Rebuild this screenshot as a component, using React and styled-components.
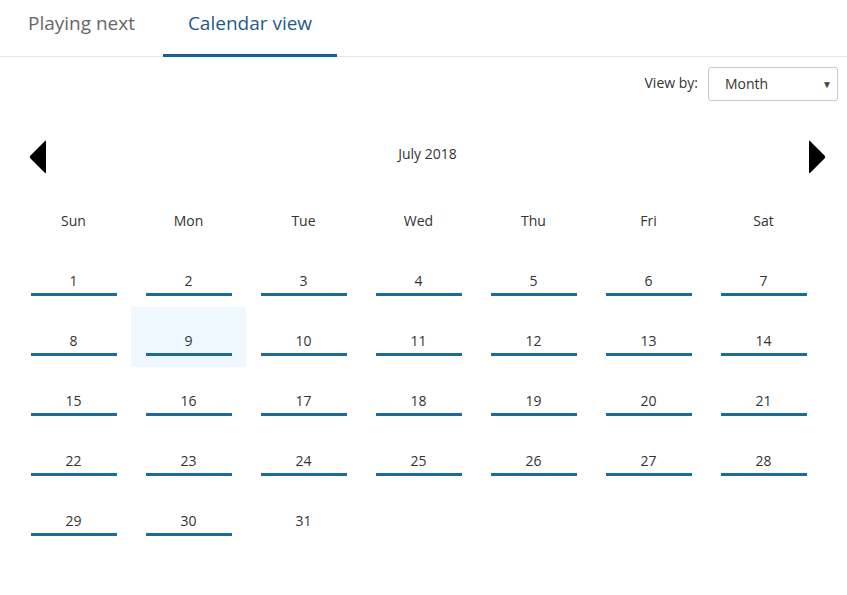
import React from 'react'
import styled, { createGlobalStyle } from 'styled-components'

const GlobalStyle = createGlobalStyle`
  body {
    margin: 0;
    background: #fff;
    font-family: "Open Sans", "Liberation Sans", sans-serif;
    color: #333;
  }
`

const Page = styled.div`
  width: 847px;
  height: 595px;
  overflow: hidden;
`

const Tabs = styled.div`
  display: flex;
  height: 57px;
  border-bottom: 1px solid #e6e6e6;
  box-sizing: border-box;
`

const Tab = styled.div`
  display: flex;
  align-items: center;
  justify-content: center;
  width: ${p => p.width}px;
  height: 57px;
  box-sizing: border-box;
  padding-bottom: 8px;
  font-size: 19px;
  color: ${p => (p.active ? '#1f5a8c' : '#666')};
  border-bottom: 3px solid ${p => (p.active ? '#1a5f96' : 'transparent')};
  margin-bottom: -1px;
`

const Toolbar = styled.div`
  display: flex;
  justify-content: flex-end;
  align-items: center;
  gap: 10px;
  padding: 10px 9px 0 0;
  height: 34px;
`

const Label = styled.span`
  font-size: 14px;
  color: #333;
  padding-bottom: 3px;
`

const Select = styled.div`
  position: relative;
  width: 130px;
  height: 34px;
  box-sizing: border-box;
  border: 1px solid #ccc;
  border-radius: 3px;
  display: flex;
  align-items: center;
  padding: 0 0 2px 16px;
  font-size: 14px;
  color: #333;
`

const Caret = styled.span`
  position: absolute;
  right: 5px;
  top: 9px;
  font-size: 10px;
  color: #444;
`

const MonthBar = styled.div`
  display: flex;
  align-items: center;
  justify-content: space-between;
  padding: 0 20px 0 28px;
  margin-top: 38px;
  height: 36px;
`

const MonthTitle = styled.div`
  font-size: 14px;
  color: #333;
  padding-bottom: 8px;
`

const Arrow = styled.svg`
  width: 20px;
  height: 36px;
  display: block;
`

const Grid = styled.div`
  display: grid;
  grid-template-columns: repeat(7, 115px);
  margin: 12px 0 0 16px;
`

const DayName = styled.div`
  height: 60px;
  display: flex;
  justify-content: center;
  align-items: flex-start;
  font-size: 14px;
  color: #333;
  padding-top: 24px;
  box-sizing: border-box;
`

const Cell = styled.div`
  height: 60px;
  box-sizing: border-box;
  background: ${p => (p.selected ? '#eff7ff' : 'transparent')};
  display: flex;
  flex-direction: column;
  align-items: center;
  padding-top: 24px;
`

const DateNum = styled.div`
  width: 86px;
  text-align: center;
  font-size: 14px;
  line-height: 19px;
  color: #333;
  padding-bottom: 3px;
  border-bottom: 3px solid ${p => (p.marked ? '#1b6c9b' : 'transparent')};
`

const days = ['Sun', 'Mon', 'Tue', 'Wed', 'Thu', 'Fri', 'Sat']

const LeftArrow = () => (
  <Arrow viewBox="0 0 20 36">
    <path d="M18 2 L18 33 Q18 35 16.5 33.5 L2.5 19.5 Q1 18 2.5 16.5 L16.5 2.5 Q18 1 18 2 Z" fill="#000" />
  </Arrow>
)

const RightArrow = () => (
  <Arrow viewBox="0 0 20 36">
    <path d="M2 2 L2 33 Q2 35 3.5 33.5 L17.5 19.5 Q19 18 17.5 16.5 L3.5 2.5 Q2 1 2 2 Z" fill="#000" />
  </Arrow>
)

const App = () => {
  const dates = Array.from({ length: 31 }, (_, i) => i + 1)
  return (
    <Page>
      <GlobalStyle />
      <Tabs>
        <Tab width={163}>Playing next</Tab>
        <Tab width={174} active>Calendar view</Tab>
      </Tabs>
      <Toolbar>
        <Label>View by:</Label>
        <Select>
          Month
          <Caret>▼</Caret>
        </Select>
      </Toolbar>
      <MonthBar>
        <LeftArrow />
        <MonthTitle>July 2018</MonthTitle>
        <RightArrow />
      </MonthBar>
      <Grid>
        {days.map(d => <DayName key={d}>{d}</DayName>)}
        {dates.map(n => (
          <Cell key={n} selected={n === 9}>
            <DateNum marked={n !== 31}>{n}</DateNum>
          </Cell>
        ))}
      </Grid>
    </Page>
  )
}

export default App
